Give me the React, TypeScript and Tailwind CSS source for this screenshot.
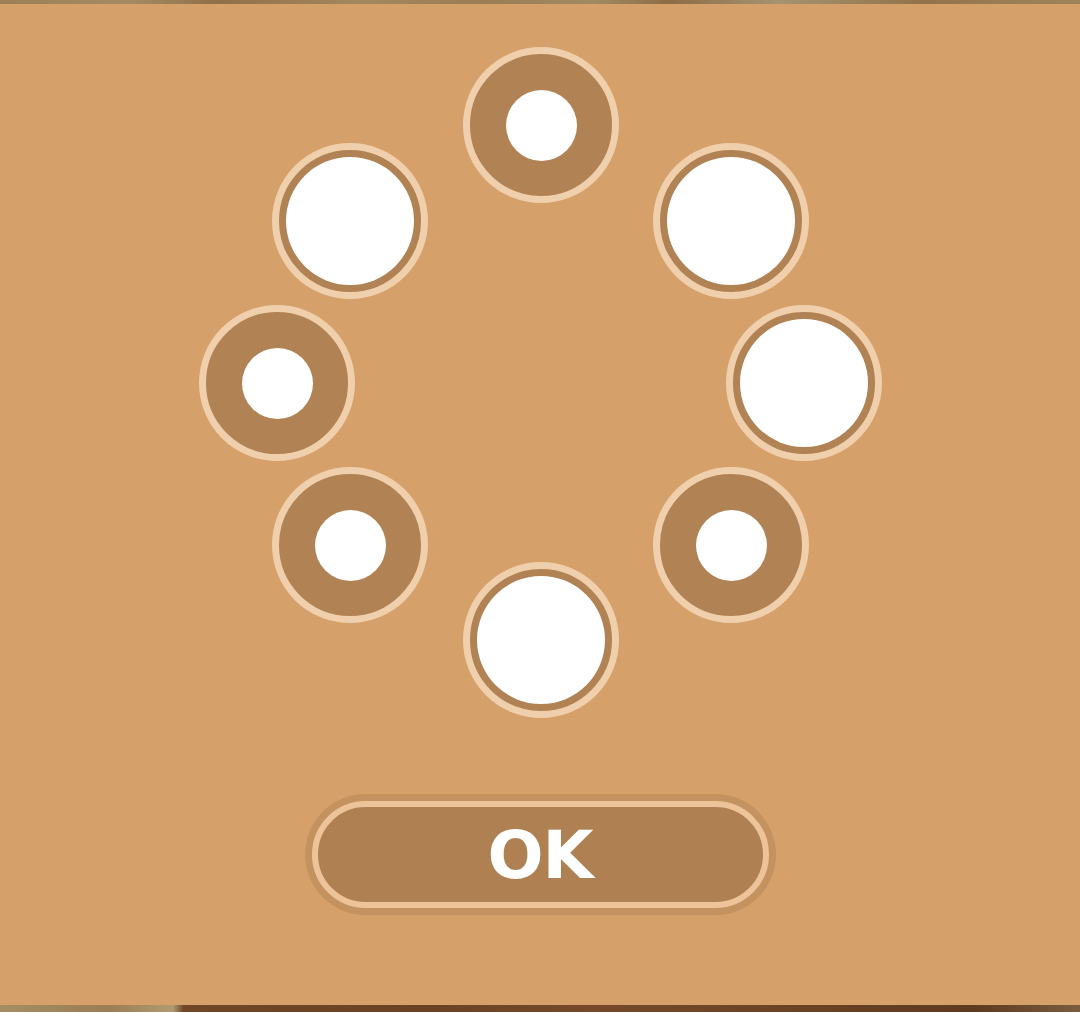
import React from 'react'

type Slot = { x: number; y: number; filled: boolean }

// ring slots, offsets inside the 684x672 canvas (circle is 156px)
const slots: Slot[] = [
  { x: 265, y: 0,   filled: false },
  { x: 74,  y: 96,  filled: true },
  { x: 455, y: 96,  filled: true },
  { x: 1,   y: 258, filled: false },
  { x: 528, y: 258, filled: true },
  { x: 74,  y: 420, filled: false },
  { x: 455, y: 420, filled: false },
  { x: 265, y: 515, filled: true },
]

function Hole({ filled }: { filled: boolean }) {
  return (
    <div className="w-[156px] h-[156px] rounded-full border-[7px] border-[#EFCFAC] bg-[#B08254] flex items-center justify-center">
      {filled ? (
        <div className="w-[128px] h-[128px] rounded-full bg-white" />
      ) : (
        <div className="w-[71px] h-[71px] rounded-full bg-white" />
      )}
    </div>
  )
}

export default function App() {
  return (
    <div className="w-[1080px] h-[1012px] bg-[#D6A06B] flex flex-col overflow-hidden">
      {/* textured edge top */}
      <div className="h-[4px] bg-[linear-gradient(90deg,#9C7F57_0%,#A48B62_12%,#8F7049_20%,#A3875E_33%,#9A7D55_45%,#A08A62_55%,#8C6C45_62%,#A59372_72%,#917349_85%,#9F845B_100%)]" />

      <div className="flex-1 flex flex-col items-center">
        <div className="relative w-[684px] h-[672px] mt-[43px]">
          {slots.map((s, i) => (
            <div key={i} className="absolute" style={{ left: s.x, top: s.y }}>
              <Hole filled={s.filled} />
            </div>
          ))}
        </div>

        <button className="mt-[75px] w-[471px] h-[121px] rounded-full bg-[#C4925F] p-[7px]">
          <div className="w-full h-full rounded-full border-[6px] border-[#EDC49A] bg-[#AE8052] flex items-center justify-center">
            <span
              className="text-white font-bold text-[66px] leading-none tracking-[-1px] mt-[2px]"
              style={{ fontFamily: '"DejaVu Sans", sans-serif' }}
            >
              OK
            </span>
          </div>
        </button>
      </div>

      {/* textured edge bottom */}
      <div className="h-[7px] bg-[linear-gradient(90deg,#A58D63_0%,#9A7E55_10%,#B29A70_16%,#6F4727_17%,#6B4324_40%,#75492A_55%,#6A4224_75%,#5E3A20_90%,#7A5C3E_100%)]" />
    </div>
  )
}
